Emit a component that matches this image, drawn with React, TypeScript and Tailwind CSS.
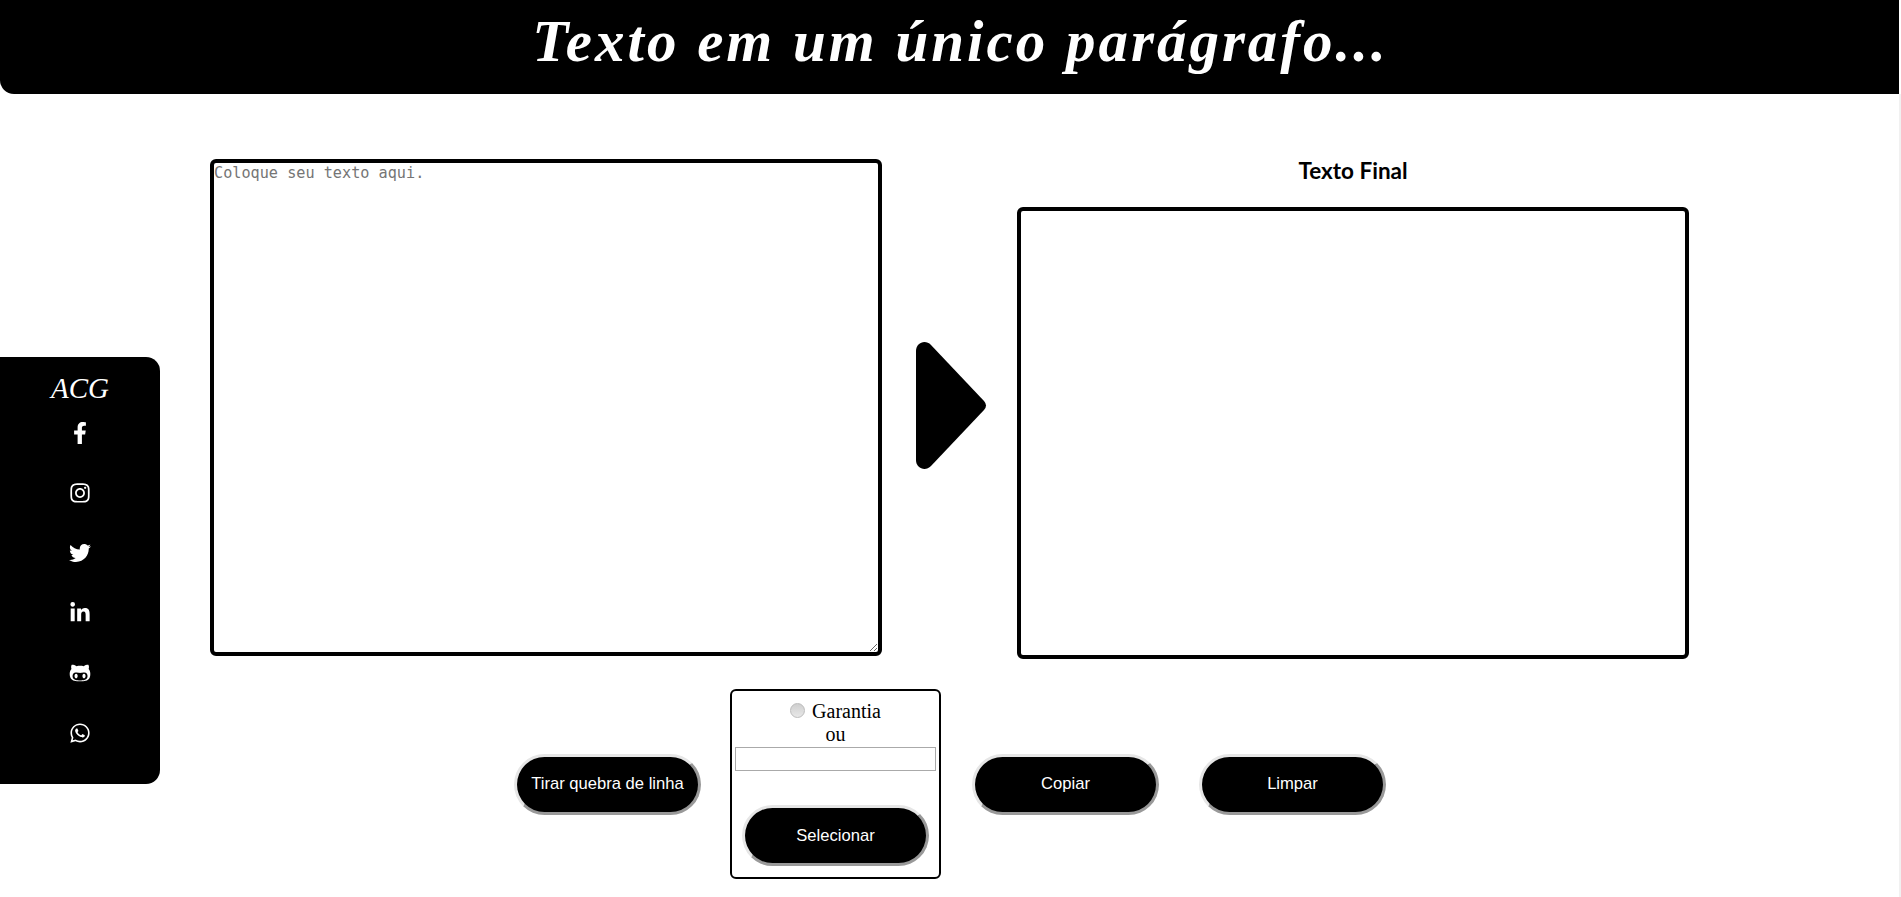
import React from "react";
import { FaFacebookF, FaInstagram, FaTwitter, FaLinkedinIn, FaGithubAlt, FaWhatsapp } from "react-icons/fa";

const SOCIALS = [FaFacebookF, FaInstagram, FaTwitter, FaLinkedinIn, FaGithubAlt, FaWhatsapp];

const btn =
  "w-[187px] h-[61px] shrink-0 rounded-[31px] bg-black text-white text-[16.6px] font-['Liberation_Sans',Arial,sans-serif] border-[3px] border-t-[#e6e6e6] border-l-[#e6e6e6] border-b-[#999999] border-r-[#999999]";

export default function App() {
  return (
    <div className="flex min-h-[897px] bg-white">
      <div className="flex-1 min-w-0">
        {/* Header */}
        <header className="h-[94px] bg-black rounded-bl-[14px] flex items-center justify-center pl-[22px] pb-[12px]">
          <h1 className="text-white text-[59px] font-bold italic tracking-[3px] font-['Comic_Sans_MS',cursive]">
            Texto em um único parágrafo...
          </h1>
        </header>

        <div className="flex items-start">
          {/* Sidebar */}
          <aside className="w-[160px] shrink-0 mt-[263px] h-[427px] bg-black rounded-r-[14px] text-white flex flex-col items-center">
            <div className="h-[46px] pt-[15px] text-[29px] leading-[32px] italic font-['Comic_Sans_MS',cursive]">ACG</div>
            {SOCIALS.map((Icon, i) => (
              <div key={i} className="h-[60px] flex items-center justify-center">
                <Icon className="w-[22px] h-[22px]" />
              </div>
            ))}
          </aside>

          <main className="flex-1 min-w-0 pt-[65px]">
            <div className="flex items-start">
              <textarea
                placeholder="Coloque seu texto aqui."
                className="ml-[50px] w-[672px] h-[497px] shrink-0 border-[4px] border-black rounded-[6px] px-0 pt-[2px] text-[15.2px] leading-[17px] font-['DejaVu_Sans_Mono',monospace] placeholder:text-[#757575] outline-none"
              />
              <svg viewBox="0 0 71 127" className="w-[71px] h-[127px] ml-[34px] mt-[183px] shrink-0" fill="black">
                <path d="M0 9C0 1 9-3 15 3L68 59Q72 63.5 68 68L15 124C9 130 0 126 0 118Z" />
              </svg>
              <section className="ml-[30px] w-[672px] shrink-0">
                <h2 className="h-[48px] text-center text-[22.5px] leading-[24px] font-bold font-['Lato',sans-serif]">Texto Final</h2>
                <div className="h-[452px] border-[4px] border-black rounded-[6px]" />
              </section>
            </div>

            {/* Actions */}
            <div className="flex items-center ml-[354px] mt-[30px]">
              <button className={btn}>Tirar quebra de linha</button>
              <div className="ml-[29px] w-[211px] h-[190px] shrink-0 border-2 border-black rounded-[6px] flex flex-col items-center pt-[9px] text-[20px] leading-[23px] font-['Liberation_Serif','Times_New_Roman',serif]">
                <label className="flex items-center gap-[7px]">
                  <input type="radio" disabled className="appearance-none w-[15px] h-[15px] -mt-[3px] rounded-full border border-[#bbbbbb] bg-gradient-to-b from-[#cfcfcf] to-[#e8e8e8]" />
                  Garantia
                </label>
                <span>ou</span>
                <input type="text" className="mt-[1px] w-[201px] h-[24px] shrink-0 border border-[#aaaaaa] outline-none" />
                <button className={btn + " mt-[34px]"}>Selecionar</button>
              </div>
              <button className={btn + " ml-[31px]"}>Copiar</button>
              <button className={btn + " ml-[40px]"}>Limpar</button>
            </div>
          </main>
        </div>
      </div>
      <div className="w-[2px] shrink-0 mt-[94px] bg-[#f1f1f1]" />
    </div>
  );
}
